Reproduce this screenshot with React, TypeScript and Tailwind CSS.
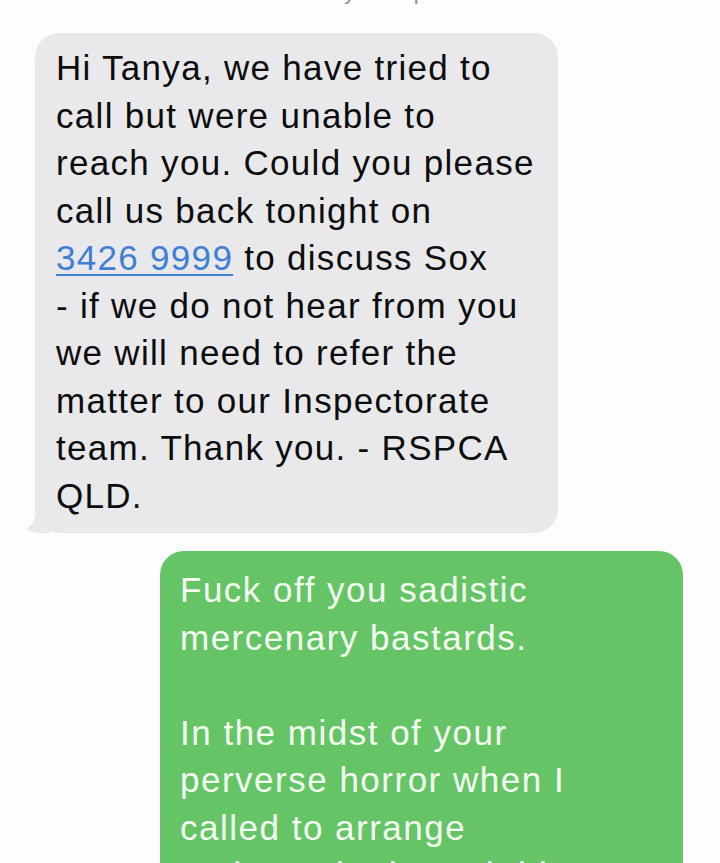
import React from "react";

const font = { fontFamily: '"Liberation Sans", Arial, Helvetica, sans-serif' };

// lines are broken exactly as in the screenshot
const incoming: React.ReactNode[] = [
  "Hi Tanya, we have tried to",
  "call but were unable to",
  "reach you. Could you please",
  "call us back tonight on",
  <>
    <span className="text-[#3f7fd6] underline decoration-[2px] underline-offset-[4px]">3426 9999</span> to discuss Sox
  </>,
  "- if we do not hear from you",
  "we will need to refer the",
  "matter to our Inspectorate",
  "team. Thank you. - RSPCA",
  "QLD.",
];

const outgoing: string[] = [
  "Fuck off you sadistic",
  "mercenary bastards.",
  "",
  "In the midst of your",
  "perverse horror when I",
  "called to arrange",
  "euthanasia through him",
];

export default function App() {
  return (
    <div className="h-[863px] overflow-hidden bg-[#fdfdfd]" style={font}>
      {/* timestamp, only its descenders show at the top edge */}
      <div className="h-[5px] overflow-hidden flex justify-center pl-[20px]">
        <span className="-mt-[21px] text-[22px] leading-[26px] text-[#8e8e93] tracking-[0.5px]">Today 6:04 pm</span>
      </div>

      <div className="pt-[28px] pl-[35px]">
        <div className="relative w-[523px] rounded-[24px] bg-[#e9e9eb] pt-[11px] pb-[14px] pl-[21px] pr-2 text-[35px] leading-[47.5px] tracking-[1.3px] text-[#0d0d0d]">
          {incoming.map((line, i) => (
            <div key={i} className="whitespace-nowrap">
              {line}
            </div>
          ))}
          <svg
            className="absolute -left-[9px] bottom-0"
            width="24"
            height="26"
            viewBox="0 0 24 26"
          >
            <path d="M24 0 V26 H14 C9 26 4 25 0 22 C6 19 9 13 9 6 V0 Z" fill="#e9e9eb" />
          </svg>
        </div>
      </div>

      <div className="pt-[18px] pl-[160px]">
        <div className="w-[523px] rounded-[24px] bg-[#65c466] pt-[15px] pb-[14px] pl-[20px] pr-2 text-[35px] leading-[47.5px] tracking-[1.5px] text-[#f4fff1]">
          {outgoing.map((line, i) => (
            <div key={i} className="whitespace-nowrap h-[47.5px]">
              {line}
            </div>
          ))}
        </div>
      </div>
    </div>
  );
}
